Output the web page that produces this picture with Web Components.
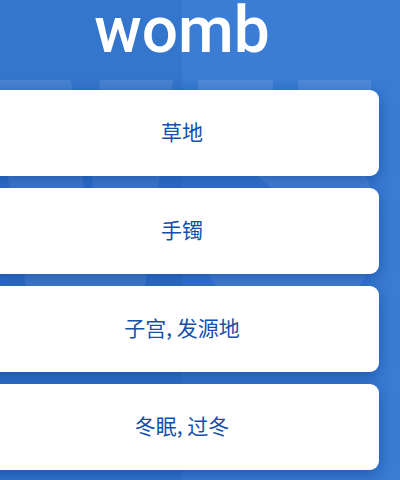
<!DOCTYPE html>
<html lang="zh-CN">
<head>
<meta charset="utf-8">
<meta name="viewport" content="width=device-width, initial-scale=1">
<title>womb</title>
<style>
html, body { margin: 0; min-height: 100%; background: #3b7dd4; }
</style>
</head>
<body>
<quiz-page>
  <quiz-word>womb</quiz-word>
  <quiz-choices>
    <quiz-choice>草地</quiz-choice>
    <quiz-choice>手镯</quiz-choice>
    <quiz-choice>子宫, 发源地</quiz-choice>
    <quiz-choice>冬眠, 过冬</quiz-choice>
  </quiz-choices>
</quiz-page>
<script>
const define = (name, html) => customElements.define(name, class extends HTMLElement {
  constructor() {
    super();
    this.attachShadow({ mode: 'open' }).innerHTML = html;
  }
});

define('quiz-backdrop', `
  <style>
    :host { display: block; position: absolute; inset: 0; overflow: hidden; z-index: -1;
      background: linear-gradient(90deg, #3576cd 182px, #3b7dd4 182px); }
    svg { display: block; }
  </style>
  <svg width="400" height="480" viewBox="0 0 400 480" fill="#fff" fill-opacity=".1" aria-hidden="true">
    <path d="M0 80H71L84 189V230L92 189L100 80H173L145 286H26L0 130Z"/>
    <path d="M198 80H273V130H198ZM298 80H371V130H298Z"/>
    <path d="M257 176H366Q379 204 374 240Q370 270 360 286H216Q206 274 202 250H330L273 189Z"/>
  </svg>`);

define('quiz-page', `
  <style>
    :host { display: block; position: relative; isolation: isolate; overflow: hidden; min-height: 100vh;
      font-family: Roboto, "Noto Sans CJK SC", sans-serif; }
    main { display: flex; flex-direction: column; }
  </style>
  <quiz-backdrop></quiz-backdrop>
  <main><slot></slot></main>`);

define('quiz-word', `
  <style>
    :host { display: block; margin: 0 21px 0 -15px; padding-bottom: 28px; }
    h1 { margin: 0; text-align: center; color: #fff; font-size: 64px; font-weight: 500; line-height: 62px; }
  </style>
  <h1><slot></slot></h1>`);

define('quiz-choices', `
  <style>
    :host { display: flex; flex-direction: column; gap: 12px; margin: 0 21px 9px -15px; }
  </style>
  <slot></slot>`);

define('quiz-choice', `
  <style>
    :host { display: block; }
    button { display: block; box-sizing: border-box; width: 100%; min-height: 86px; margin: 0; padding: 0 16px 4px;
      border: 0; border-radius: 9px; background: #fff; color: #1450aa; cursor: pointer;
      font: 400 21px/32px "Noto Sans CJK SC", sans-serif;
      box-shadow: 0 4px 16px rgba(0, 55, 140, .55); }
  </style>
  <button type="button"><slot></slot></button>`);
</script>
</body>
</html>
